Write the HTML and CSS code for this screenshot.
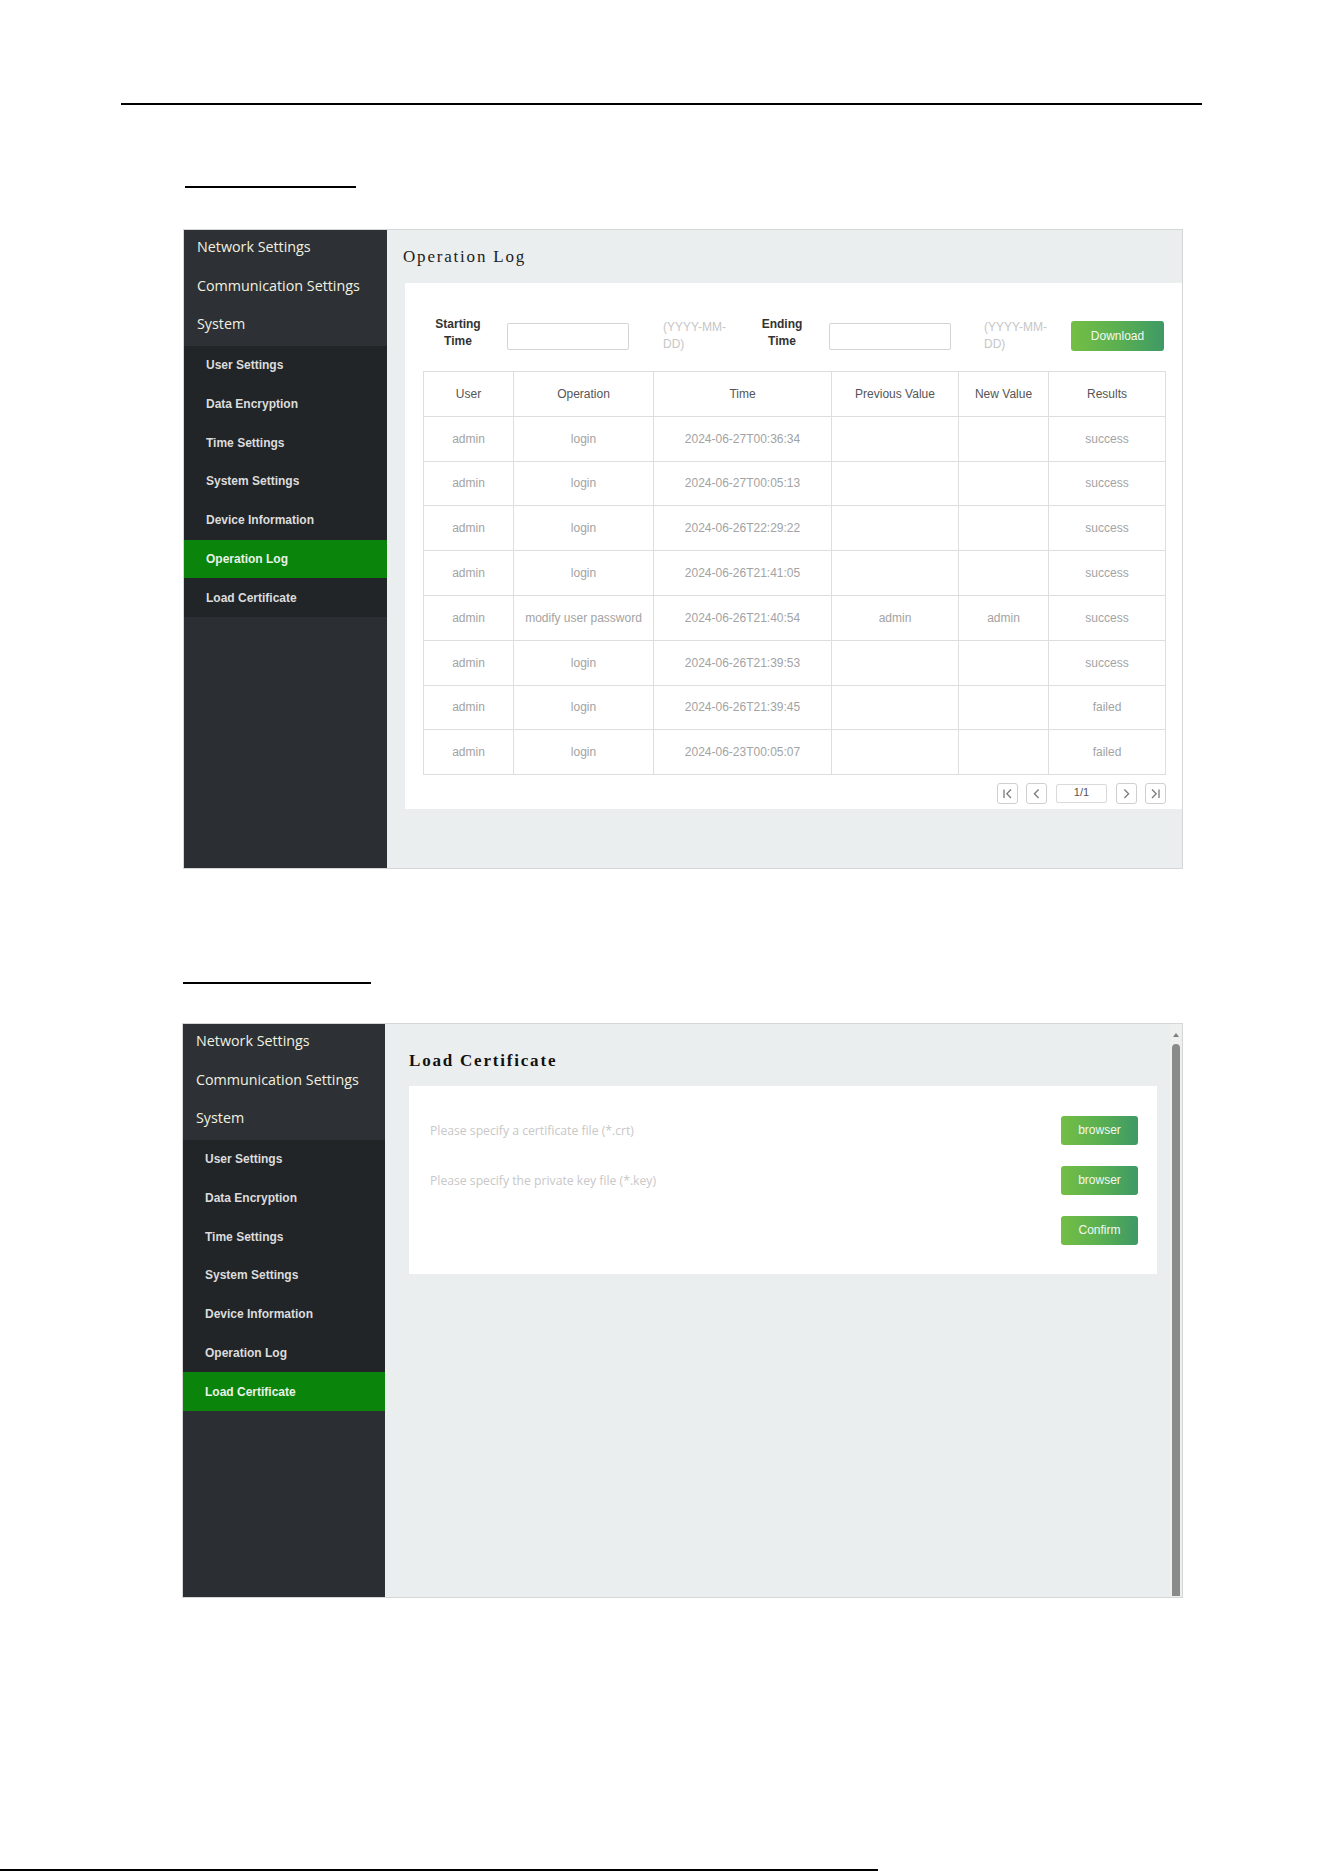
FILE: index.html
```html
<!DOCTYPE html>
<html lang="en">
<head>
<meta charset="utf-8">
<title>Operation Log / Load Certificate</title>
<link rel="stylesheet" href="styles.css">
</head>
<body>
<div class="rule"></div>

<div class="heading-mark heading-mark--log"></div>

<section class="frame frame--log">
  <nav class="sidebar">
    <div class="nav-top">
      <div class="nav-main">Network Settings</div>
      <div class="nav-main">Communication Settings</div>
      <div class="nav-main">System</div>
    </div>
    <ul class="nav-sub">
      <li>User Settings</li>
      <li>Data Encryption</li>
      <li>Time Settings</li>
      <li>System Settings</li>
      <li>Device Information</li>
      <li class="active">Operation Log</li>
      <li>Load Certificate</li>
    </ul>
  </nav>
  <div class="content content--log">
    <h2 class="page-title">Operation Log</h2>
    <div class="panel panel--log">
      <div class="filter">
        <div class="filter-label">Starting<br>Time</div>
        <div class="date-input date-input--start"></div>
        <div class="date-hint date-hint--start">(YYYY-MM-DD)</div>
        <div class="filter-label filter-label--end">Ending<br>Time</div>
        <div class="date-input date-input--end"></div>
        <div class="date-hint date-hint--end">(YYYY-MM-DD)</div>
        <button class="btn btn--download">Download</button>
      </div>

      <table class="log-table">
        <colgroup>
          <col class="c-user"><col class="c-op"><col class="c-time"><col class="c-prev"><col class="c-new"><col class="c-res">
        </colgroup>
        <thead>
          <tr><th>User</th><th>Operation</th><th>Time</th><th>Previous Value</th><th>New Value</th><th>Results</th></tr>
        </thead>
        <tbody>
          <tr><td>admin</td><td>login</td><td>2024-06-27T00:36:34</td><td></td><td></td><td>success</td></tr>
          <tr><td>admin</td><td>login</td><td>2024-06-27T00:05:13</td><td></td><td></td><td>success</td></tr>
          <tr><td>admin</td><td>login</td><td>2024-06-26T22:29:22</td><td></td><td></td><td>success</td></tr>
          <tr><td>admin</td><td>login</td><td>2024-06-26T21:41:05</td><td></td><td></td><td>success</td></tr>
          <tr><td>admin</td><td>modify user password</td><td>2024-06-26T21:40:54</td><td>admin</td><td>admin</td><td>success</td></tr>
          <tr><td>admin</td><td>login</td><td>2024-06-26T21:39:53</td><td></td><td></td><td>success</td></tr>
          <tr><td>admin</td><td>login</td><td>2024-06-26T21:39:45</td><td></td><td></td><td>failed</td></tr>
          <tr><td>admin</td><td>login</td><td>2024-06-23T00:05:07</td><td></td><td></td><td>failed</td></tr>
        </tbody>
      </table>

      <div class="pager">
        <span class="pg-btn"><svg viewBox="0 0 21 21" width="21" height="21"><path d="M7 6.5v8.5M14 6.5l-4.2 4.2 4.2 4.3" fill="none" stroke="#7a7a7a" stroke-width="1.3"/></svg></span>
        <span class="pg-btn"><svg viewBox="0 0 21 21" width="21" height="21"><path d="M12.6 6.5l-4.2 4.2 4.2 4.3" fill="none" stroke="#7a7a7a" stroke-width="1.3"/></svg></span>
        <span class="pg-input">1/1</span>
        <span class="pg-btn"><svg viewBox="0 0 21 21" width="21" height="21"><path d="M8.4 6.5l4.2 4.2-4.2 4.3" fill="none" stroke="#7a7a7a" stroke-width="1.3"/></svg></span>
        <span class="pg-btn"><svg viewBox="0 0 21 21" width="21" height="21"><path d="M7 6.5l4.2 4.2-4.2 4.3M14 6.5v8.5" fill="none" stroke="#7a7a7a" stroke-width="1.3"/></svg></span>
      </div>
    </div>
  </div>
</section>

<div class="heading-mark heading-mark--cert"></div>

<section class="frame frame--cert">
  <nav class="sidebar">
    <div class="nav-top">
      <div class="nav-main">Network Settings</div>
      <div class="nav-main">Communication Settings</div>
      <div class="nav-main">System</div>
    </div>
    <ul class="nav-sub">
      <li>User Settings</li>
      <li>Data Encryption</li>
      <li>Time Settings</li>
      <li>System Settings</li>
      <li>Device Information</li>
      <li>Operation Log</li>
      <li class="active">Load Certificate</li>
    </ul>
  </nav>
  <div class="content content--cert">
    <div class="cert-main">
      <h2 class="page-title page-title--cert">Load Certificate</h2>
      <div class="panel panel--cert">
        <div class="cert-row">
          <span class="cert-hint">Please specify a certificate file (*.crt)</span>
          <button class="btn btn--cert">browser</button>
        </div>
        <div class="cert-row">
          <span class="cert-hint">Please specify the private key file (*.key)</span>
          <button class="btn btn--cert">browser</button>
        </div>
        <div class="cert-row">
          <span class="cert-hint"></span>
          <button class="btn btn--cert">Confirm</button>
        </div>
      </div>
    </div>
    <div class="scrollbar">
      <span class="scroll-arrow"></span>
      <span class="scroll-thumb"></span>
    </div>
  </div>
</section>

<div class="footer-line"></div>
</body>
</html>
```

FILE: styles.css
```css
* {
  box-sizing: border-box;
}

html, body {
  margin: 0;
  padding: 0;
  background: #ffffff;
}

body {
  font-family: "Liberation Sans", Arial, sans-serif;
  color: #333;
  width: 1324px;
  height: 1872px;
  overflow: hidden;
}

/* document rules */
.rule {
  margin: 103px 0 0 121px;
  width: 1081px;
  height: 2px;
  background: #000;
}

.heading-mark {
  height: 2px;
  background: #000;
}

.heading-mark--log {
  margin: 81px 0 0 185px;
  width: 171px;
}

.heading-mark--cert {
  margin: 113px 0 0 183px;
  width: 188px;
}

.footer-line {
  margin-top: 271px;
  width: 878px;
  height: 2px;
  background: #000;
}

/* application frame */
.frame {
  display: flex;
  border: 1px solid #d6d6d6;
  background: #ebeeef;
}

.frame--log {
  margin: 41px 0 0 183px;
  width: 1000px;
  height: 640px;
}

.frame--cert {
  margin: 39px 0 0 182px;
  width: 1001px;
  height: 575px;
}

/* sidebar */
.sidebar {
  display: flex;
  flex-direction: column;
  background: #2b2e32;
  flex: none;
}

.frame--log .sidebar {
  width: 203px;
}

.frame--cert .sidebar {
  width: 202px;
}

.nav-top {
  background: #2d3034;
}

.nav-main {
  height: 38.7px;
  display: flex;
  align-items: center;
  padding: 0 0 6px 13px;
  font-family: "Open Sans", "Noto Sans", sans-serif;
  font-size: 14.3px;
  color: #f1f0e0;
  white-space: nowrap;
}

.nav-sub {
  list-style: none;
  margin: 0;
  padding: 0;
  background: #222528;
}

.nav-sub li {
  height: 38.7px;
  display: flex;
  align-items: center;
  padding-left: 22px;
  font-family: "Liberation Sans", Arial, sans-serif;
  font-weight: bold;
  font-size: 12px;
  color: #dcdcdc;
}

.nav-sub li.active {
  background: #0a840a;
  color: #e8f2e8;
}

/* content */
.content {
  flex: 1;
  min-width: 0;
}

.page-title {
  margin: 0;
  font-family: "Liberation Serif", "Times New Roman", serif;
  font-weight: normal;
  font-size: 17px;
  letter-spacing: 1.8px;
  color: #1d1d1d;
  height: 53px;
  line-height: 54px;
  padding-left: 16px;
}

.panel {
  background: #ffffff;
}

.panel--log {
  margin-left: 18px;
  padding: 38px 16px 5px 18px;
}

/* filter row */
.filter {
  display: flex;
  align-items: center;
  height: 30px;
}

.filter-label {
  width: 70px;
  text-align: center;
  font-weight: bold;
  font-size: 12px;
  line-height: 17px;
  color: #333;
  margin-top: -6px;
}

.filter-label--end {
  margin-left: 18px;
}

.date-input {
  width: 122px;
  height: 27px;
  border: 1px solid #d4d4d4;
  border-radius: 2px;
  background: #fff;
}

.date-input--start {
  margin-left: 14px;
}

.date-input--end {
  margin-left: 12px;
}

.date-hint {
  width: 66px;
  font-size: 12px;
  line-height: 17px;
  color: #c6c6c6;
}

.date-hint--start {
  margin-left: 34px;
}

.date-hint--end {
  margin-left: 33px;
}

.btn {
  border: 0;
  border-radius: 3px;
  background: linear-gradient(90deg, #74be45 0%, #5bb050 50%, #3e9966 100%);
  color: #f4f8f2;
  font-family: "Liberation Sans", Arial, sans-serif;
  font-size: 12px;
  padding: 0;
  cursor: pointer;
}

.btn--download {
  margin-left: 21px;
  width: 93px;
  height: 30px;
}

/* table */
.log-table {
  margin-top: 20px;
  width: 742px;
  border-collapse: collapse;
  table-layout: fixed;
  font-size: 12px;
}

.c-user { width: 90px; }
.c-op { width: 140px; }
.c-time { width: 178px; }
.c-prev { width: 127px; }
.c-new { width: 90px; }
.c-res { width: 117px; }

.log-table th,
.log-table td {
  border: 1px solid #dedede;
  height: 44.8px;
  padding: 0;
  text-align: center;
  font-weight: normal;
  white-space: nowrap;
}

.log-table th {
  color: #555;
}

.log-table td {
  color: #a3a3a3;
}

/* pagination */
.pager {
  margin-top: 8px;
  display: flex;
  justify-content: flex-end;
  align-items: center;
  height: 21px;
  gap: 8px;
}

.pg-btn {
  width: 21px;
  height: 21px;
  border: 1px solid #cfcfcf;
  border-radius: 3px;
  display: flex;
  align-items: center;
  justify-content: center;
  background: #fff;
}

.pg-btn svg {
  display: block;
  flex: none;
}

.pg-input {
  width: 51px;
  height: 19px;
  margin: 0 1px;
  border: 1px solid #dadada;
  border-radius: 2px;
  font-size: 11px;
  line-height: 15px;
  text-align: center;
  color: #555;
}

/* certificate page */
.content--cert {
  display: flex;
}

.cert-main {
  flex: 1;
  min-width: 0;
}

.page-title--cert {
  font-weight: bold;
  height: 62px;
  line-height: 54px;
  padding-top: 10px;
  padding-left: 24px;
  color: #111;
}

.panel--cert {
  margin: 0 13px 0 24px;
  padding: 29px 19px 29px 21px;
  display: flex;
  flex-direction: column;
  gap: 20px;
}

.cert-row {
  display: flex;
  justify-content: space-between;
  align-items: center;
  height: 30px;
}

.cert-hint {
  font-family: "Open Sans", "Noto Sans", sans-serif;
  font-size: 12.2px;
  color: #c8c8c8;
}

.btn--cert {
  width: 77px;
  height: 29px;
}

/* scrollbar */
.scrollbar {
  flex: none;
  width: 12px;
  display: flex;
  flex-direction: column;
  align-items: center;
  padding-top: 9px;
  background: #eef0f0;
}

.scroll-arrow {
  width: 0;
  height: 0;
  border-left: 3.5px solid transparent;
  border-right: 3.5px solid transparent;
  border-bottom: 4px solid #7d7d7d;
}

.scroll-thumb {
  margin-top: 7px;
  width: 8px;
  flex: 1;
  margin-bottom: 1px;
  background: #8a8a8a;
  border-radius: 4px 4px 0 0;
}
```
